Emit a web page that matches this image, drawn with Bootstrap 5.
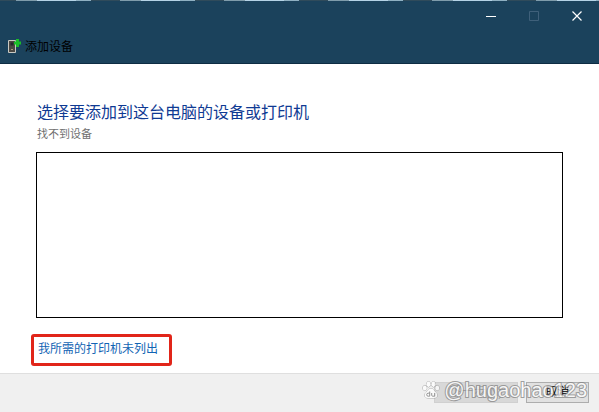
<!DOCTYPE html>
<html lang="zh-CN">
<head>
<meta charset="utf-8">
<meta name="viewport" content="width=device-width, initial-scale=1">
<title>添加设备</title>
<link href="https://cdn.jsdelivr.net/npm/bootstrap@5.3.0/dist/css/bootstrap.min.css" rel="stylesheet">
<style>
body { font-family: "Liberation Sans", "Noto Sans CJK SC", sans-serif; background: #fff; }
.title-bar { background: #1b425c; border-bottom: 1px solid #0d2c43; }
.desktop-edge { height: 1px; background: repeating-linear-gradient(90deg, #304b5b 0 16px, #7f9cab 16px 37px, #b5d3e6 37px 76px, #8fb0c2 76px 91px, #304b5b 91px 104px); }
.win-controls { height: 29px; padding-right: 1px; }
.win-btn { width: 43px; color: #fff; }
.win-btn:disabled { color: #53718a; border: 0; }
.app-title { height: 33px; padding-left: 7px; gap: 3px; font-size: 12px; color: #000; }
.wizard { padding: 37px 36px 7px 37px; }
.wizard-heading { font-size: 16px; line-height: 24px; color: #0f3a93; }
.wizard-status { font-size: 11px; line-height: 16px; color: #707070; margin: 1px 0 10px; }
.device-list { border: 1px solid #000; margin-left: -1px; }
.not-listed { margin: 16px 0 0 -6px; padding: 2px 11px 4px 4px; border: 3px solid #e12519; border-radius: 3px; font-size: 12px; line-height: 20px; color: #1264b4; }
.action-bar { background: #f0f0f0; border-top: 1px solid #dfdfdf; padding: 8px 10px 9px; gap: 8px; }
.dialog-btn { height: 21px; border: 1px solid #adadad; background: #e1e1e1; color: #000; font-size: 12px; line-height: 19px; padding: 0; border-radius: 0; }
.dialog-btn:disabled { background: #ccc; border-color: #bfbfbf; color: #777; }
.next-btn { width: 84px; }
.cancel-btn { width: 63px; }
.watermark { right: 12px; bottom: 9px; gap: 4px; font-size: 20px; line-height: 26px; color: #fff; -webkit-text-stroke: 2px #858585; paint-order: stroke fill; opacity: .75; pointer-events: none; }
</style>
<script defer src="https://cdn.jsdelivr.net/npm/bootstrap@5.3.0/dist/js/bootstrap.bundle.min.js"></script>
</head>
<body class="d-flex flex-column min-vh-100">
<header class="title-bar">
  <div class="desktop-edge"></div>
  <div class="win-controls d-flex justify-content-end">
    <button type="button" class="win-btn btn border-0 rounded-0 p-0 d-flex align-items-center justify-content-center" aria-label="最小化"><svg width="10" height="10"><path d="M0 5.5H10" stroke="currentColor"/></svg></button>
    <button type="button" class="win-btn btn border-0 rounded-0 p-0 d-flex align-items-center justify-content-center" aria-label="最大化" disabled><svg width="10" height="10"><path d="M.5.5h9v9h-9z" fill="none" stroke="currentColor"/></svg></button>
    <button type="button" class="win-btn btn border-0 rounded-0 p-0 d-flex align-items-center justify-content-center" aria-label="关闭"><svg width="10" height="10"><path d="M.5.5l9 9M9.5.5l-9 9" stroke="currentColor" stroke-width="1.2"/></svg></button>
  </div>
  <div class="app-title d-flex align-items-center">
    <svg width="15" height="16" viewBox="0 0 15 16" aria-hidden="true"><path d="M1.500 1.500h7v12h-7z" fill="#4b4843" stroke="#c9c9c3"/><path d="M3.500 3.500h3v3h-3z" fill="#24292a"/><path d="M4 10.500h2" stroke="#a99a80"/><path d="M9 0h3v2.500h2v3h-2V8H9V5.500H7v-3h2z" fill="#19bd29"/></svg>
    <span>添加设备</span>
  </div>
</header>
<main class="wizard flex-grow-1 d-flex flex-column">
  <h1 class="wizard-heading fw-normal m-0">选择要添加到这台电脑的设备或打印机</h1>
  <p class="wizard-status">找不到设备</p>
  <div class="device-list flex-grow-1" role="listbox" aria-label="设备"></div>
  <a href="#" class="not-listed align-self-start text-decoration-none">我所需的打印机未列出</a>
</main>
<footer class="action-bar position-relative d-flex justify-content-end">
  <button type="button" class="dialog-btn next-btn btn" disabled>下一步(N)</button>
  <button type="button" class="dialog-btn cancel-btn btn">取消</button>
  <div class="watermark position-absolute d-flex align-items-center">
    <svg width="18" height="18" viewBox="0 0 18 18" aria-hidden="true"><g fill="#fff" stroke="#858585" stroke-width=".8"><ellipse cx="2.800" cy="7" rx="2" ry="2.600"/><ellipse cx="6.500" cy="3.300" rx="2" ry="2.700"/><ellipse cx="11.500" cy="3.300" rx="2" ry="2.700"/><ellipse cx="15.200" cy="7" rx="2" ry="2.600"/><path d="M9 7.500c2 0 2.600 1.700 4 3.100 1.800 1.600 2.900 3 2 4.900-.9 2-3.400 1.500-6 1.500s-5.100.5-6-1.500c-.9-1.900.2-3.300 2-4.900 1.400-1.400 2-3.100 4-3.100z"/></g><path d="M7.700 10.500v4.700H6.200a1.500 1.500 0 0 1 0-3h1.500M9.700 12v2.200q0 1 1 1h2V12" fill="none" stroke="#777"/></svg>
    <span>@hugaohao123</span>
  </div>
</footer>
</body>
</html>
